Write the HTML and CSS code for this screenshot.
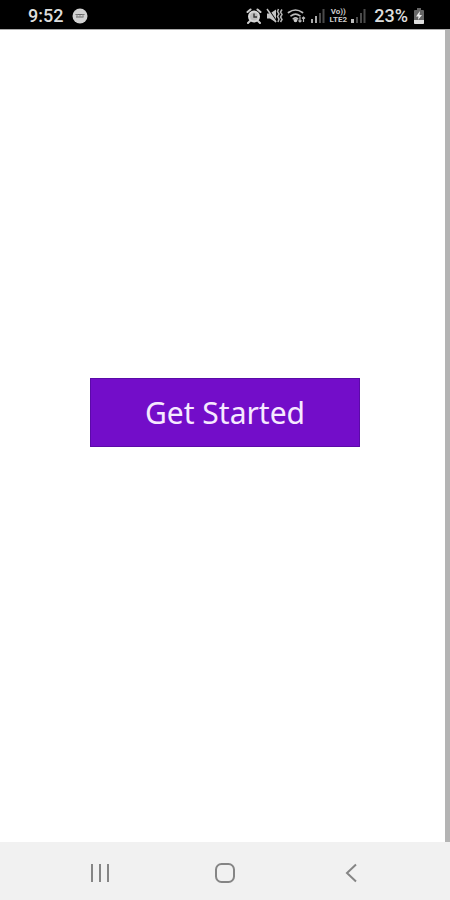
FILE: index.html
```
<!DOCTYPE html>
<html lang="en">

<head>
    <meta charset="UTF-8">
    <meta name="viewport" content="width=device-width, initial-scale=1.0">
    <title>Get Started</title>
    <link rel="stylesheet" href="styles.css">
</head>

<body>
    <!-- status bar -->
    <header class="status-bar">
        <div class="status-left">
            <span class="clock">9:52</span>
            <svg class="icon" width="16" height="16" viewBox="0 0 16 16">
                <circle cx="8" cy="8" r="7.5" fill="#d2d2d2" />
                <path d="M3.500 6.500h9M4 9h7.500" stroke="#666" stroke-width="1.200" />
                <path d="M5 6v3M8 7v2M11 6v3" stroke="#888" />
            </svg>
        </div>
        <div class="status-right">
            <!-- alarm -->
            <svg class="icon" width="16" height="16" viewBox="0 0 16 16">
                <path d="M1.500 4l3-2.500M14.500 4l-3-2.500M4 13l-2 2M12 13l2 2" stroke="#ccc" stroke-width="2" stroke-linecap="round" />
                <circle cx="8" cy="8.500" r="5" fill="#bbb" stroke="#d8d8d8" stroke-width="2" />
                <path d="M8 5.500v3.500h3" fill="none" stroke="#333" stroke-width="1.400" />
            </svg>
            <!-- muted, vibrate -->
            <svg class="icon" width="17" height="16" viewBox="0 0 17 16">
                <path d="M1 5.500h3l6-4v13l-6-4H1z" fill="#c5c5c5" />
                <path d="M2 1l9 13" stroke="#000" stroke-width="1.500" />
                <path d="M1 1l9 13" stroke="#c5c5c5" stroke-width="1.500" />
                <path d="M12.500 1l-1 2.500 1.500 2.500-1.500 2.500 1.500 2.500-1 3M16 1.500l-1.500 2.500 1.500 2.500-1.500 2.500 1.500 2.500-1.500 2.500" fill="none" stroke="#b5b5b5" stroke-width="1.500" />
            </svg>
            <!-- wifi -->
            <svg class="icon" width="19" height="16" viewBox="0 0 19 16">
                <path d="M1.500 4.500q7-5 14 0M4 7.800q4.500-3.500 9 0M6.300 10.800q2.200-1.800 4.400 0" fill="none" stroke="#bbb" stroke-width="1.700" stroke-linecap="round" />
                <circle cx="8.500" cy="12.500" r="1.800" fill="#ccc" />
                <path d="M13 9v5M11.500 12.500l1.500 1.500 1.500-1.500M16.500 14V9M15 10.500L16.500 9l1.500 1.500" fill="none" stroke="#bbb" stroke-width="1.200" />
            </svg>
            <!-- sim 1 -->
            <svg class="icon" width="15" height="16" viewBox="0 0 15 16">
                <path d="M2 15v-4M6 15V8" stroke="#aaa" stroke-width="2" />
                <path d="M10 15V5M13.500 15V1" stroke="#4a4a4a" stroke-width="2" />
            </svg>
            <div class="volte"><span>Vo))</span><span>LTE2</span></div>
            <!-- sim 2 -->
            <svg class="icon" width="15" height="16" viewBox="0 0 15 16">
                <path d="M1.500 15v-4" stroke="#bbb" stroke-width="3" />
                <path d="M6 15V9M10 15V5M13.500 15V1" stroke="#4a4a4a" stroke-width="2" />
            </svg>
            <span class="battery-text">23%</span>
            <!-- battery -->
            <svg class="icon" width="12" height="16" viewBox="0 0 12 16">
                <path d="M4 0h4v2h2q1 0 1 1v12q0 1-1 1H2q-1 0-1-1V3q0-1 1-1h2z" fill="#666" />
                <path d="M1 12h10v3q0 1-1 1H2q-1 0-1-1z" fill="#ddd" />
                <path d="M7 3L3 8.500h2.500L5 12l4-5H6.500z" fill="#eee" />
            </svg>
        </div>
    </header>

    <!-- scrolling page -->
    <main class="content">
        <button type="button" class="start-button">Get Started</button>
    </main>

    <!-- navigation bar -->
    <nav class="nav-bar">
        <button type="button" class="nav-button" aria-label="Recent apps">
            <svg width="22" height="22" viewBox="0 0 22 22">
                <path d="M3 2v18M11 2v18M19 2v18" stroke="#858585" stroke-width="2" />
            </svg>
        </button>
        <button type="button" class="nav-button" aria-label="Home">
            <svg width="22" height="22" viewBox="0 0 22 22">
                <rect x="2" y="2" width="18" height="18" rx="5.500" fill="none" stroke="#858585" stroke-width="2" />
            </svg>
        </button>
        <button type="button" class="nav-button" aria-label="Back">
            <svg width="22" height="22" viewBox="0 0 22 22">
                <path d="M16 2.500L7 11l9 8.500" fill="none" stroke="#858585" stroke-width="2" />
            </svg>
        </button>
    </nav>
</body>

</html>
```
FILE: styles.css
```
* {
    box-sizing: border-box;
}

body {
    display: flex;
    flex-direction: column;
    min-height: 100vh;
    margin: 0;
    background: #fff;
    font-family: "Noto Sans", sans-serif;
}

/* status bar */

.status-bar {
    display: flex;
    justify-content: space-between;
    align-items: center;
    height: 30px;
    padding: 2px 25px 0 28px;
    background: #000;
    border-bottom: 1px solid #aaa;
    color: #ddd;
    font-family: Roboto, sans-serif;
    font-size: 18px;
    font-weight: 500;
    line-height: 20px;
}

.status-left,
.status-right {
    display: flex;
    align-items: center;
}

.status-left {
    gap: 9px;
}

.status-right {
    gap: 4px;
}

.icon {
    display: block;
    flex: none;
}

.volte {
    display: flex;
    flex-direction: column;
    width: 18px;
    color: #ccc;
    font-size: 8px;
    font-weight: 700;
    line-height: 8px;
    text-align: center;
}

.battery-text {
    margin: 0 1px 0 4px;
}

/* page, with the scrollbar track on the right */

.content {
    display: flex;
    flex: 1;
    justify-content: center;
    align-items: center;
    padding: 0 0 48px 5px;
    border-right: 5px solid #b4b4b4;
}

.start-button {
    width: 62%;
    max-width: 270px;
    padding: 13px 0;
    border: 1px solid #5b0aa8;
    background: #730dc9;
    color: #f6e9ff;
    font-family: inherit;
    font-size: 30px;
    line-height: 41px;
    cursor: pointer;
}

/* navigation bar */

.nav-bar {
    display: grid;
    grid-template-columns: repeat(3, 1fr);
    align-items: center;
    height: 58px;
    padding: 3px 36px 0 37px;
    background: #f1f1f1;
}

.nav-button {
    display: flex;
    justify-content: center;
    padding: 8px;
    border: 0;
    background: none;
}
```
